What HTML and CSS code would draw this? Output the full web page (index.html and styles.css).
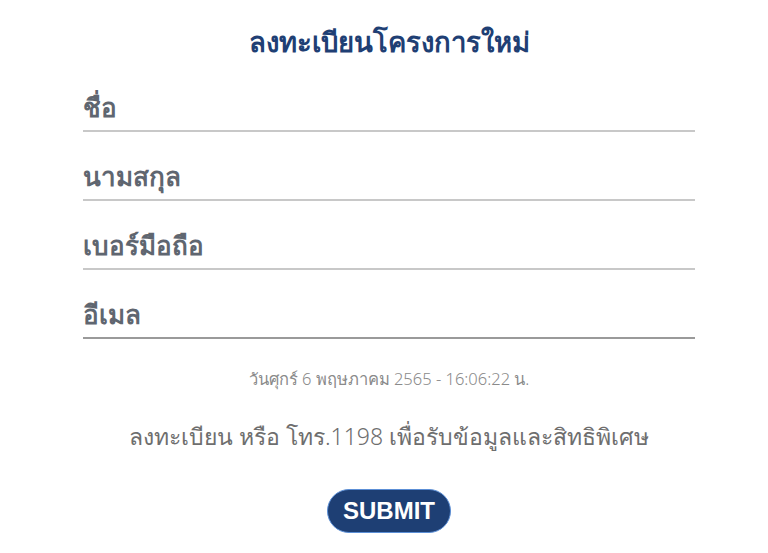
FILE: index.html
```html
<!DOCTYPE html>
<html lang="th">
<head>
    <meta charset="UTF-8">
    <meta name="viewport" content="width=device-width, initial-scale=1.0">
    <title>ลงทะเบียนโครงการใหม่</title>
    <link rel="stylesheet" href="styles.css">
</head>
<body>
    <div class="register">
        <h1 class="title">ลงทะเบียนโครงการใหม่</h1>

        <form class="form">
            <div class="field"><input type="text" placeholder="ชื่อ"></div>
            <div class="field"><input type="text" placeholder="นามสกุล"></div>
            <div class="field"><input type="tel" placeholder="เบอร์มือถือ"></div>
            <div class="field last"><input type="email" placeholder="อีเมล"></div>

            <p class="date">วันศุกร์ 6 พฤษภาคม 2565 - 16:06:22 น.</p>
            <p class="note">ลงทะเบียน หรือ โทร.1198 เพื่อรับข้อมูลและสิทธิพิเศษ</p>

            <button type="button" class="submit">SUBMIT</button>
        </form>
    </div>
</body>
</html>
```

FILE: styles.css
```css
body {
    margin: 0;
    padding-left: 10px;
    background: #fff;
    font-family: "Noto Sans", "Liberation Sans", sans-serif;
}
.register {
    width: 612px;
    margin: 0 auto;
    padding-top: 22px;
    display: flex;
    flex-direction: column;
    align-items: center;
}
.title {
    margin: 0;
    font-size: 27.5px;
    line-height: 40px;
    font-weight: 700;
    color: #1f3f74;
}
.form {
    width: 100%;
    display: flex;
    flex-direction: column;
    align-items: center;
}
.field {
    width: 100%;
    border-bottom: 2px solid #c8c8c8;
    margin-top: 20px;
}
.field:first-child {
    margin-top: 21px;
}
.field.last {
    border-bottom-color: #9a9a9a;
}
.field input {
    width: 100%;
    box-sizing: border-box;
    border: none;
    outline: none;
    padding: 0;
    height: 47px;
    font-family: inherit;
    font-size: 26px;
    font-weight: 700;
    color: #5f6670;
    background: transparent;
}
.field input::placeholder {
    color: #5f6670;
}
.date {
    margin: 30px 0 0;
    font-size: 16.5px;
    line-height: 20px;
    font-weight: 300;
    color: #8a8a8a;
}
.note {
    margin: 32px 0 0;
    font-size: 23px;
    line-height: 30px;
    font-weight: 300;
    color: #6e6e6e;
}
.submit {
    margin-top: 38px;
    width: 124px;
    height: 44px;
    border: 1px solid #5c8fd6;
    border-radius: 22px;
    background: #1e3f74;
    color: #fff;
    font-family: "Liberation Sans", Arial, sans-serif;
    font-size: 24px;
    font-weight: 700;
    cursor: pointer;
}
```
